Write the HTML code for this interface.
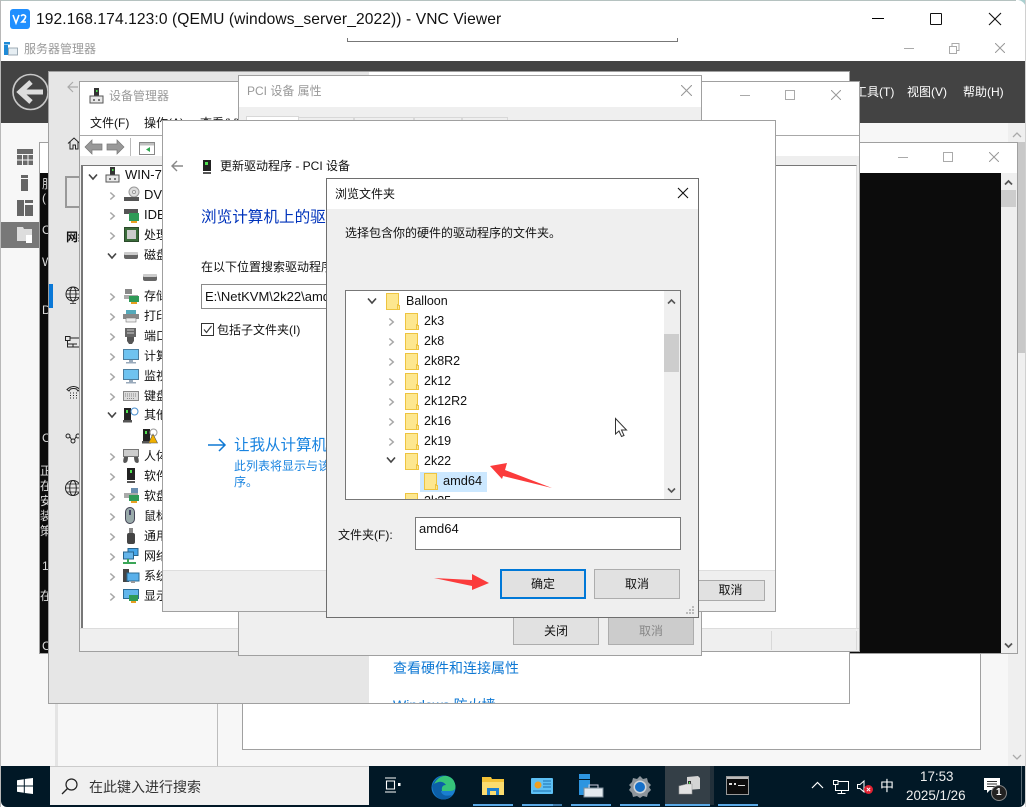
<!DOCTYPE html>
<html><head><meta charset="utf-8"><style>
html,body{margin:0;padding:0;width:1026px;height:807px;overflow:hidden;background:#fff}
body{position:relative;font-family:"Liberation Sans","Noto Sans CJK SC",sans-serif;font-size:12px;color:#111}
div,span,svg{position:absolute}
svg{overflow:visible}
.t{white-space:nowrap;line-height:16px}
.w{box-sizing:border-box;border:1px solid #a0a0a0;background:#fff;overflow:hidden}
.btn{box-sizing:border-box;border:1px solid #adadad;background:#e1e1e1;text-align:center;font-size:12px}
</style></head><body>
<svg width="0" height="0" style="left:0;top:0"><defs>
<symbol id="fo" viewBox="0 0 14 17"><path d="M.5.5H12.5V12.5H13.5V16.5H.5Z" fill="#fde78f" stroke="#eec440"/><path d="M11.5 16V11.5H13" fill="none" stroke="#eec440"/></symbol>
<symbol id="cr" viewBox="0 0 8 10"><path d="M1.5 1L6 5 1.5 9" fill="none" stroke="#a6a6a6" stroke-width="1.7"/></symbol>
<symbol id="cd" viewBox="0 0 10 8"><path d="M1 1.5L5 6 9 1.5" fill="none" stroke="#444" stroke-width="1.6"/></symbol>
<symbol id="x" viewBox="0 0 10 10"><path d="M0 0L10 10M10 0L0 10" fill="none" stroke="#999" stroke-width="1"/></symbol>
<symbol id="mon" viewBox="0 0 16 15"><rect x=".5" y=".5" width="15" height="10" fill="#6fc3f0" stroke="#4d7e9e"/><rect x="6" y="11" width="4" height="2" fill="#9ab"/><rect x="3" y="13" width="10" height="1.5" fill="#9ab"/></symbol>
</defs></svg>

<!-- desktop/vnc frame -->
<div style="left:0;top:0;width:1026px;height:807px;background:#fff;border-top:1px solid #b5c2c0;box-sizing:border-box"></div>
<div style="left:1016px;top:0;width:10px;height:8px;background:#aacfcf"></div>
<div style="left:1016px;top:0;width:10px;height:10px;background:#fff;border-top-right-radius:9px"></div>
<div style="left:0;top:0;width:1px;height:807px;background:#b8b8b8"></div>
<div style="left:1025px;top:0;width:1px;height:807px;background:#d0d0d0"></div>
<svg style="left:10px;top:9px" width="20" height="20"><rect width="20" height="20" rx="3" fill="#1f8fff"/><path d="M3 6L6 14 9 6" fill="none" stroke="#fff" stroke-width="1.6"/><path d="M11 7Q13 5 15 6.500T12 13H16" fill="none" stroke="#fff" stroke-width="1.6"/></svg>
<div class="t" style="left:36px;top:11px;font-size:15.6px;line-height:18px;letter-spacing:.09px;color:#111">192.168.174.123:0 (QEMU (windows_server_2022)) - VNC Viewer</div>
<div style="left:347px;top:38px;width:331px;height:4px;box-sizing:border-box;border:1px solid #777;border-top:0"></div>
<div style="left:872px;top:18px;width:12px;height:1px;background:#000"></div>
<div style="left:930px;top:13px;width:12px;height:12px;box-sizing:border-box;border:1.3px solid #111;border-radius:1px"></div>
<svg style="left:989px;top:13px" width="12" height="12"><path d="M0 0L12 12M12 0L0 12" stroke="#111" stroke-width="1.1"/></svg>

<!-- server manager title -->
<svg style="left:4px;top:42px" width="14" height="14"><rect x="0" y="0" width="6" height="2.500" fill="#1f8ad6"/><rect x="0" y="3" width="4" height="10" fill="#1f8ad6"/><rect x="4.500" y="6" width="9" height="7" fill="#e6eef3" stroke="#8a9aa5" stroke-width=".8"/></svg>
<div class="t" style="left:24px;top:41px;color:#999">服务器管理器</div>
<div style="left:904px;top:48px;width:10px;height:1px;background:#aaa"></div>
<svg style="left:949px;top:43px" width="11" height="11"><path d="M.5 3.500H7.500V10.500H.5ZM3 3.500V.5H10V7.500H7.500" fill="none" stroke="#aaa"/></svg>
<svg style="left:995px;top:43px" width="10" height="10"><use href="#x"/></svg>

<!-- dark band -->
<div style="left:1px;top:61px;width:1024px;height:62px;background:#434343"></div>
<div class="t" style="left:855px;top:84px;color:#fff">工具(T)</div>
<div class="t" style="left:907px;top:84px;color:#fff">视图(V)</div>
<div class="t" style="left:963px;top:84px;color:#fff">帮助(H)</div>
<svg style="left:12px;top:73px" width="37" height="38"><circle cx="18.500" cy="19" r="17.500" fill="none" stroke="#c8c8c8" stroke-width="1.600"/><path d="M8 19H31M19 9L8 19 19 29" fill="none" stroke="#ddd" stroke-width="5"/></svg>

<!-- content backdrop -->
<div style="left:1px;top:123px;width:1024px;height:643px;background:#f7f7f7"></div>
<div style="left:55px;top:703px;width:3px;height:63px;background:#e4e4e4"></div>
<div style="left:217px;top:703px;width:1px;height:63px;background:#bdbdbd"></div>
<div style="left:242px;top:650px;width:739px;height:100px;box-sizing:border-box;background:#fff;border:1px solid #a0a0a0"></div>
<div style="left:1008px;top:123px;width:17px;height:643px;background:#efefef"></div>
<div style="left:1018px;top:142px;width:7px;height:211px;background:#c8c8c8"></div>
<svg style="left:1012px;top:132px" width="10" height="6"><path d="M1 5L5 1 9 5" fill="none" stroke="#aaa" stroke-width="1.300"/></svg>
<svg style="left:1012px;top:754px" width="10" height="6"><path d="M1 1L5 5 9 1" fill="none" stroke="#aaa" stroke-width="1.300"/></svg>

<!-- sidebar -->
<svg style="left:17px;top:149px" width="17" height="17"><path d="M0 0H16V5H0ZM0 6H5V10.500H0ZM6 6H10.500V10.500H6ZM11.500 6H16V10.500H11.500ZM0 11.500H5V16H0ZM6 11.500H10.500V16H6ZM11.500 11.500H16V16H11.500Z" fill="#6a6a6a"/></svg>
<svg style="left:21px;top:175px" width="8" height="16"><path d="M0 0H7V3H0ZM0 4H7V16H0Z" fill="#666"/></svg>
<svg style="left:17px;top:200px" width="17" height="17"><path d="M0 0H7V16H0ZM8 0H16V3H8ZM8 5H16V16H8Z" fill="#666"/></svg>
<div style="left:1px;top:222px;width:39px;height:26px;background:#787878"></div>
<svg style="left:17px;top:227px" width="17" height="16"><path d="M0 0H6L7 2H15V14H0Z" fill="#ddd"/><path d="M9 8H15V16H9Z" fill="#fff"/></svg>

<!-- console window -->
<div style="left:39px;top:142px;width:979px;height:512px;box-sizing:border-box;border:1px solid #a0a0a0;background:#fff"></div>
<div style="left:40px;top:173px;width:961px;height:480px;background:#0c0c0c;overflow:hidden;color:#ddd;font-size:12px">
<span class="t" style="left:2px;top:3px">服</span><span class="t" style="left:2px;top:17px">(</span>
<span class="t" style="left:2px;top:49px">C</span><span class="t" style="left:2px;top:81px">W</span>
<span class="t" style="left:2px;top:129px">D</span><span class="t" style="left:2px;top:257px">C</span>
<span class="t" style="left:0;top:290px">正</span><span class="t" style="left:0;top:305px">在</span><span class="t" style="left:0;top:320px">安</span><span class="t" style="left:0;top:335px">装</span><span class="t" style="left:0;top:350px">策</span>
<span class="t" style="left:2px;top:385px">1</span><span class="t" style="left:0;top:415px">在</span><span class="t" style="left:2px;top:465px">C</span>
</div>
<div style="left:1001px;top:173px;width:16px;height:480px;background:#efefef"></div>
<div style="left:1001px;top:190px;width:15px;height:17px;background:#cdcdcd"></div>
<svg style="left:1004px;top:179px" width="10" height="7"><path d="M1 5.500L4.500 2 8 5.500" fill="none" stroke="#555" stroke-width="1.800"/></svg>
<svg style="left:1004px;top:642px" width="10" height="7"><path d="M1 1.500L4.500 5 8 1.500" fill="none" stroke="#555" stroke-width="1.800"/></svg>
<div style="left:898px;top:157px;width:10px;height:1px;background:#aaa"></div>
<div style="left:943px;top:152px;width:10px;height:10px;box-sizing:border-box;border:1px solid #aaa"></div>
<svg style="left:989px;top:152px" width="10" height="10"><use href="#x"/></svg>

<!-- server manager inner window -->
<div class="w" style="left:48px;top:71px;width:802px;height:633px;background:#fff">
 <div style="left:0;top:0;width:320px;height:631px;background:#e6e6e6"></div>
 <div class="t" style="left:344px;top:588px;color:#0e78d4;font-size:14px">查看硬件和连接属性</div>
 <div class="t" style="left:344px;top:625px;color:#0e78d4;font-size:14px">Windows 防火墙</div>
 <svg style="left:18px;top:9px" width="12" height="12"><path d="M11 6H1M6 1L1 6 6 11" fill="none" stroke="#aaa" stroke-width="1.200"/></svg>
 <div style="left:0;top:212px;width:4px;height:24px;background:#0a78d7"></div>
 <svg style="left:18px;top:65px" width="14" height="13"><path d="M1 6.500L7 1 13 6.500M3 5V12H6V8H8.500V12H11V5" fill="none" stroke="#222"/></svg>
 <div style="left:16px;top:104px;width:20px;height:32px;box-sizing:border-box;border:2px solid #999;background:#e6e6e6"></div>
 <div class="t" style="left:17px;top:157px;font-weight:bold">网络</div>
 <svg style="left:16px;top:215px" width="16" height="17"><circle cx="8" cy="7" r="7" fill="none" stroke="#222"/><ellipse cx="8" cy="7" rx="3" ry="7" fill="none" stroke="#222"/><path d="M1 7H15M2 3.500H14M2 10.500H14M8 14V16.500M5 16.500H11" fill="none" stroke="#222" stroke-width=".8"/></svg>
 <svg style="left:16px;top:264px" width="16" height="14"><path d="M.5.500H5V4.500H.5ZM5 2H15M2.500 4.500V11H15M2.500 8H12M8 8V11" fill="none" stroke="#222"/></svg>
 <svg style="left:17px;top:313px" width="15" height="14"><path d="M1 4.500Q7.500-1.500 14 4.500L12 6 10.500 4Q7.500 3 4.500 4L3 6Z" fill="none" stroke="#222"/><path d="M4 8h1M7 8h1M10 8h1M4 10.500h1M7 10.500h1M10 10.500h1M4 13h1M7 13h1M10 13h1" stroke="#222"/></svg>
 <svg style="left:16px;top:360px" width="16" height="12"><circle cx="3" cy="4" r="2" fill="none" stroke="#222"/><circle cx="13" cy="4" r="2" fill="none" stroke="#222"/><circle cx="8" cy="9" r="2" fill="none" stroke="#222"/><path d="M5 5L6.500 7.500M11 5L9.500 7.500" stroke="#222"/></svg>
 <svg style="left:16px;top:408px" width="16" height="16"><circle cx="8" cy="8" r="7.500" fill="none" stroke="#222"/><ellipse cx="8" cy="8" rx="3.300" ry="7.500" fill="none" stroke="#222"/><path d="M.5 8H15.500M2 4H14M2 12H14" fill="none" stroke="#222" stroke-width=".8"/></svg>
</div>

<!-- device manager -->
<div class="w" style="left:79px;top:81px;width:781px;height:571px;background:#efefef">
 <div style="left:0;top:0;width:779px;height:53px;background:#fff"></div>
 <svg style="left:9px;top:6px" width="15" height="16"><rect x="5" y="0" width="5" height="8" fill="#333"/><rect x="7" y="2" width="1.500" height="2" fill="#4fe04f"/><path d="M1 8H14V15H1Z" fill="#e8e8e8" stroke="#555"/><circle cx="5" cy="12" r="1" fill="#555"/><circle cx="10" cy="12" r="1" fill="#555"/></svg>
 <div class="t" style="left:29px;top:6px;color:#999">设备管理器</div>
 <div class="t" style="left:10px;top:33px;color:#111">文件(F)</div>
 <div class="t" style="left:64px;top:33px;color:#111">操作(A)</div>
 <div class="t" style="left:120px;top:33px;color:#111">查看(V)</div>
 <div style="left:660px;top:13px;width:10px;height:1px;background:#aaa"></div>
 <div style="left:705px;top:8px;width:10px;height:10px;box-sizing:border-box;border:1px solid #aaa"></div>
 <svg style="left:751px;top:8px" width="10" height="10"><use href="#x"/></svg>
 <div style="left:0;top:53px;width:779px;height:1px;background:#a8a8a8"></div>
 <div style="left:0;top:54px;width:779px;height:22px;background:#fff"></div>
 <svg style="left:5px;top:58px" width="18" height="14"><path d="M0 7L7 0V4H17V10H7V14Z" fill="#999" stroke="#777" stroke-width=".7"/></svg>
 <svg style="left:27px;top:58px" width="18" height="14"><path d="M17 7L10 0V4H0V10H10V14Z" fill="#999" stroke="#777" stroke-width=".7"/></svg>
 <div style="left:50px;top:56px;width:1px;height:18px;background:#bbb"></div>
 <svg style="left:59px;top:60px" width="16" height="13"><rect x=".5" y=".5" width="15" height="12" fill="#fff" stroke="#888"/><rect x="1" y="1" width="14" height="2.500" fill="#c0c0c0"/><path d="M11 5V10L7 7.500Z" fill="#2fa84f"/></svg>
 <div style="left:0;top:74px;width:779px;height:4px;background:#eee"></div>
 <div style="left:1px;top:83px;width:776px;height:463px;box-sizing:border-box;background:#fff;border-top:1px solid #777;border-left:2px solid #777;border-right:1px solid #ddd"></div>
 <div style="left:0;top:546px;width:779px;height:1px;background:#dcdcdc"></div>
 <div style="left:691px;top:549px;width:1px;height:19px;background:#d8d8d8"></div>
 <div style="left:776px;top:549px;width:1px;height:19px;background:#d8d8d8"></div>
</div>
<!-- device tree -->
<svg style="left:88px;top:173px" width="10" height="8"><use href="#cd"/></svg>
<svg style="left:105px;top:167px" width="15" height="16"><rect x="5" y="0" width="5" height="8" fill="#333"/><rect x="7" y="2" width="1.500" height="2" fill="#4fe04f"/><path d="M1 8H14V15H1Z" fill="#e8e8e8" stroke="#555"/><circle cx="5" cy="12" r="1" fill="#555"/><circle cx="10" cy="12" r="1" fill="#555"/></svg>
<div class="t" style="left:125px;top:167px;font-size:13px">WIN-7</div>
<div class="t" style="left:144px;top:187px;font-size:13px">DVD</div>
<div class="t" style="left:144px;top:207px;font-size:13px">IDE</div>
<div class="t" style="left:144px;top:227px">处理器</div>
<div class="t" style="left:144px;top:247px">磁盘驱</div>
<div class="t" style="left:144px;top:288px">存储控</div>
<div class="t" style="left:144px;top:308px">打印队</div>
<div class="t" style="left:144px;top:328px">端口</div>
<div class="t" style="left:144px;top:348px">计算机</div>
<div class="t" style="left:144px;top:368px">监视器</div>
<div class="t" style="left:144px;top:388px">键盘</div>
<div class="t" style="left:144px;top:407px">其他设</div>
<div class="t" style="left:144px;top:448px">人体学</div>
<div class="t" style="left:144px;top:468px">软件设</div>
<div class="t" style="left:144px;top:488px">软盘驱</div>
<div class="t" style="left:144px;top:508px">鼠标和</div>
<div class="t" style="left:144px;top:528px">通用串</div>
<div class="t" style="left:144px;top:548px">网络适</div>
<div class="t" style="left:144px;top:568px">系统设</div>
<div class="t" style="left:144px;top:588px">显示适</div>
<svg style="left:109px;top:191px" width="7" height="10"><use href="#cr"/></svg>
<svg style="left:109px;top:211px" width="7" height="10"><use href="#cr"/></svg>
<svg style="left:109px;top:231px" width="7" height="10"><use href="#cr"/></svg>
<svg style="left:107px;top:252px" width="10" height="8"><use href="#cd"/></svg>
<svg style="left:109px;top:292px" width="7" height="10"><use href="#cr"/></svg>
<svg style="left:109px;top:312px" width="7" height="10"><use href="#cr"/></svg>
<svg style="left:109px;top:332px" width="7" height="10"><use href="#cr"/></svg>
<svg style="left:109px;top:352px" width="7" height="10"><use href="#cr"/></svg>
<svg style="left:109px;top:372px" width="7" height="10"><use href="#cr"/></svg>
<svg style="left:109px;top:392px" width="7" height="10"><use href="#cr"/></svg>
<svg style="left:107px;top:411px" width="10" height="8"><use href="#cd"/></svg>
<svg style="left:109px;top:452px" width="7" height="10"><use href="#cr"/></svg>
<svg style="left:109px;top:472px" width="7" height="10"><use href="#cr"/></svg>
<svg style="left:109px;top:492px" width="7" height="10"><use href="#cr"/></svg>
<svg style="left:109px;top:512px" width="7" height="10"><use href="#cr"/></svg>
<svg style="left:109px;top:532px" width="7" height="10"><use href="#cr"/></svg>
<svg style="left:109px;top:552px" width="7" height="10"><use href="#cr"/></svg>
<svg style="left:109px;top:572px" width="7" height="10"><use href="#cr"/></svg>
<svg style="left:109px;top:592px" width="7" height="10"><use href="#cr"/></svg>
<!-- tree icons -->
<svg style="left:124px;top:187px" width="16" height="15"><circle cx="10" cy="5" r="5" fill="#ddd" stroke="#999"/><circle cx="10" cy="5" r="1.500" fill="#fff" stroke="#999"/><path d="M0 10H15V14H0Z" fill="#555"/></svg>
<svg style="left:124px;top:208px" width="16" height="15"><path d="M0 1H14V6H0Z" fill="#555"/><rect x="5" y="5" width="10" height="8" fill="#2f9a57"/><rect x="7" y="13" width="6" height="2" fill="#e8a020"/></svg>
<svg style="left:124px;top:227px" width="15" height="15"><rect x=".5" y=".5" width="14" height="14" fill="#3a6b3a" stroke="#2a4a2a"/><rect x="3" y="3" width="9" height="9" fill="#ccc"/></svg>
<svg style="left:124px;top:252px" width="14" height="7"><rect width="14" height="7" rx="2" fill="#666"/><rect y="0" width="14" height="3" rx="1" fill="#ccc"/></svg>
<svg style="left:143px;top:274px" width="14" height="7"><rect width="14" height="7" rx="2" fill="#666"/><rect y="0" width="14" height="3" rx="1" fill="#ccc"/></svg>
<svg style="left:124px;top:289px" width="16" height="15"><path d="M1 0H8V5H1Z" fill="#888"/><path d="M0 6H14V10H0Z" fill="#aaa"/><rect x="5" y="7" width="10" height="6" fill="#2f9a57"/><rect x="7" y="13" width="6" height="2" fill="#e8a020"/></svg>
<svg style="left:123px;top:310px" width="16" height="12"><rect x="3" y="0" width="10" height="4" fill="#5ab"/><rect x="0" y="4" width="16" height="5" fill="#888"/><rect x="3" y="8" width="10" height="4" fill="#eee" stroke="#777" stroke-width=".6"/></svg>
<svg style="left:125px;top:328px" width="11" height="16"><rect x="0" y="0" width="11" height="9" fill="#666"/><path d="M2 9H9V13L7 16H4L2 13Z" fill="#555"/><path d="M2 2h7M2 5h7" stroke="#ccc"/></svg>
<svg style="left:123px;top:349px" width="16" height="15"><use href="#mon"/></svg>
<svg style="left:123px;top:369px" width="16" height="15"><use href="#mon"/></svg>
<svg style="left:123px;top:391px" width="16" height="10"><rect x=".5" y=".5" width="15" height="9" fill="#dcdcdc" stroke="#888"/><path d="M2 3H14M2 5H14M4 7.500H12" stroke="#888" stroke-dasharray="1 1"/></svg>
<svg style="left:123px;top:408px" width="16" height="15"><rect x="1" y="0" width="7" height="12" fill="#222"/><rect x="3" y="2" width="2" height="3" fill="#4fe04f"/><rect x="0" y="12" width="9" height="2.500" fill="#555"/><circle cx="11.500" cy="3.500" r="3.500" fill="#fff" stroke="#4a90d0"/></svg>
<svg style="left:142px;top:429px" width="16" height="15"><rect x="1" y="0" width="7" height="12" fill="#222"/><rect x="3" y="2" width="2" height="3" fill="#4fe04f"/><rect x="0" y="12" width="9" height="2.500" fill="#555"/><circle cx="11.500" cy="3.500" r="3.500" fill="#fff" stroke="#999"/><path d="M11 5L6.500 14H15.500Z" fill="#f0b000" stroke="#555" stroke-width=".6"/></svg>
<svg style="left:123px;top:449px" width="16" height="15"><rect x=".5" y=".5" width="15" height="7" fill="#ccc" stroke="#777"/><path d="M1 8Q-1 14 2 14T5 8ZM11 8Q11 14 14 14T15 8Z" fill="#555"/></svg>
<svg style="left:127px;top:468px" width="9" height="16"><rect x="0" y="0" width="8" height="12" fill="#222"/><rect x="3" y="2" width="2" height="3" fill="#4fe04f"/><rect x="0" y="13" width="8" height="2" fill="#555"/></svg>
<svg style="left:124px;top:488px" width="16" height="16"><rect x="7" y="0" width="7" height="5" fill="#6a8fb0"/><path d="M0 5H14V10H0Z" fill="#aaa"/><rect x="5" y="7" width="10" height="6" fill="#2f9a57"/><rect x="7" y="13" width="6" height="2" fill="#e8a020"/></svg>
<svg style="left:125px;top:507px" width="11" height="18"><rect x=".5" y=".5" width="9" height="16" rx="4.500" fill="#9aa" stroke="#445"/><rect x="4" y="3" width="2" height="5" fill="#446"/></svg>
<svg style="left:127px;top:528px" width="8" height="16"><rect x="2" y="0" width="4" height="5" fill="#888"/><rect x="0" y="5" width="8" height="11" rx="2" fill="#444"/></svg>
<svg style="left:123px;top:548px" width="16" height="16"><rect x="5" y=".5" width="10" height="7" fill="#45a5e8" stroke="#27648c"/><rect x=".5" y="4" width="10" height="7" fill="#65b5ea" stroke="#27648c"/><path d="M5 11V14M0 15H13" stroke="#3aa657" stroke-width="2"/></svg>
<svg style="left:123px;top:569px" width="16" height="14"><rect x="0" y="0" width="6" height="13" fill="#444"/><rect x="4" y="4" width="12" height="8" fill="#59b0ea" stroke="#2c6c96"/><rect x="8" y="12" width="4" height="2" fill="#999"/></svg>
<svg style="left:123px;top:589px" width="16" height="15"><rect x=".5" y=".5" width="15" height="9" fill="#62b6ec" stroke="#2c6c96"/><rect x="6" y="6" width="9" height="6" fill="#2f9a57"/><rect x="8" y="12" width="5" height="2" fill="#e8a020"/></svg>

<!-- PCI props -->
<div class="w" style="left:238px;top:75px;width:464px;height:581px;background:#efefef">
 <div style="left:0;top:0;width:462px;height:31px;background:#fff"></div>
 <div class="t" style="left:8px;top:7px;color:#999">PCI 设备 属性</div>
 <svg style="left:442px;top:9px" width="11" height="11"><use href="#x"/></svg>
 <div style="left:7px;top:40px;width:51px;height:10px;background:#fff;border:1px solid #d8d8d8"></div>
 <div style="left:59px;top:41px;width:56px;height:9px;box-sizing:border-box;border:1px solid #d8d8d8;border-bottom:0"></div>
 <div style="left:115px;top:41px;width:60px;height:9px;box-sizing:border-box;border:1px solid #d8d8d8;border-bottom:0"></div>
 <div style="left:175px;top:41px;width:48px;height:9px;box-sizing:border-box;border:1px solid #d8d8d8;border-bottom:0"></div>
 <div style="left:223px;top:41px;width:46px;height:9px;box-sizing:border-box;border:1px solid #d8d8d8;border-bottom:0"></div>
 <div class="btn" style="left:274px;top:541px;width:86px;height:28px;line-height:26px">关闭</div>
 <div class="btn" style="left:369px;top:541px;width:86px;height:28px;line-height:26px;background:#ccc;color:#888">取消</div>
</div>

<!-- update driver -->
<div class="w" style="left:162px;top:120px;width:614px;height:492px;background:#fff">
 <svg style="left:8px;top:39px" width="12" height="12"><path d="M12 6H1M6 1L1 6 6 11" fill="none" stroke="#888" stroke-width="1.400"/></svg>
 <svg style="left:40px;top:39px" width="8" height="14"><rect width="8" height="11" fill="#222"/><rect x="2" y="2" width="3" height="3" fill="#4fe04f"/><rect y="12" width="8" height="2" fill="#555"/></svg>
 <div class="t" style="left:57px;top:37px;color:#111">更新驱动程序 - PCI 设备</div>
 <div class="t" style="left:38px;top:87px;font-size:15.6px;line-height:20px;color:#0033bb">浏览计算机上的驱动程序</div>
 <div class="t" style="left:38px;top:138px;color:#111">在以下位置搜索驱动程序:</div>
 <div style="left:38px;top:163px;width:300px;height:25px;box-sizing:border-box;border:1px solid #8a8a8a"><span class="t" style="left:3px;top:4px;font-size:13px">E:\NetKVM\2k22\amd64</span></div>
 <div style="left:38px;top:202px;width:13px;height:13px;box-sizing:border-box;border:1px solid #333"></div>
 <svg style="left:40px;top:204px" width="10" height="9"><path d="M1 4.500L3.500 7.500 8.500 1" fill="none" stroke="#333" stroke-width="1.100"/></svg>
 <div class="t" style="left:54px;top:201px;color:#111">包括子文件夹(I)</div>
 <svg style="left:45px;top:317px" width="18" height="14"><path d="M0 7H17M11 1L17 7 11 13" fill="none" stroke="#0e78d4" stroke-width="1.500"/></svg>
 <div class="t" style="left:71px;top:315px;font-size:15.5px;line-height:20px;color:#1a84e0">让我从计算机上的可用</div>
 <div class="t" style="left:71px;top:337px;color:#1a84e0">此列表将显示与该设备兼容的已安装的驱动程</div>
 <div class="t" style="left:71px;top:353px;color:#1a84e0">序。</div>
 <div style="left:0;top:449px;width:612px;height:41px;background:#efefef;border-top:1px solid #dedede"></div>
 <div class="btn" style="left:533px;top:459px;width:69px;height:21px;line-height:19px;border-color:#aaa">取消</div>
</div>

<!-- browse dialog -->
<div class="w" style="left:326px;top:178px;width:373px;height:440px;background:#efefef;border-color:#6e6e6e">
 <div style="left:0;top:0;width:371px;height:30px;background:#fff"></div>
 <div class="t" style="left:8px;top:7px;color:#111">浏览文件夹</div>
 <svg style="left:351px;top:9px" width="10" height="10"><path d="M0 0L10 10M10 0L0 10" stroke="#111" stroke-width="1.100"/></svg>
 <div class="t" style="left:18px;top:46px;color:#111">选择包含你的硬件的驱动程序的文件夹。</div>
 <div style="left:18px;top:111px;width:336px;height:210px;box-sizing:border-box;background:#fff;border:1px solid #777;overflow:hidden">
  <div style="left:318px;top:0;width:16px;height:208px;background:#efefef"></div>
  <div style="left:318px;top:43px;width:15px;height:38px;background:#cdcdcd"></div>
  <svg style="left:321px;top:7px" width="10" height="7"><path d="M1 5.500L4.500 2 8 5.500" fill="none" stroke="#555" stroke-width="1.600"/></svg>
  <svg style="left:321px;top:196px" width="10" height="7"><path d="M1 1.500L4.500 5 8 1.500" fill="none" stroke="#555" stroke-width="1.600"/></svg>
  <svg style="left:21px;top:6px" width="10" height="8"><use href="#cd"/></svg>
  <svg style="left:40px;top:2px" width="14" height="17"><use href="#fo"/></svg>
  <div class="t" style="left:60px;top:2px;font-size:12.500px">Balloon</div>
  <svg style="left:42px;top:26px" width="7" height="10"><use href="#cr"/></svg>
  <svg style="left:59px;top:22px" width="14" height="17"><use href="#fo"/></svg>
  <div class="t" style="left:78px;top:22px;font-size:12.500px">2k3</div>
  <svg style="left:42px;top:46px" width="7" height="10"><use href="#cr"/></svg>
  <svg style="left:59px;top:42px" width="14" height="17"><use href="#fo"/></svg>
  <div class="t" style="left:78px;top:42px;font-size:12.500px">2k8</div>
  <svg style="left:42px;top:66px" width="7" height="10"><use href="#cr"/></svg>
  <svg style="left:59px;top:62px" width="14" height="17"><use href="#fo"/></svg>
  <div class="t" style="left:78px;top:62px;font-size:12.500px">2k8R2</div>
  <svg style="left:42px;top:86px" width="7" height="10"><use href="#cr"/></svg>
  <svg style="left:59px;top:82px" width="14" height="17"><use href="#fo"/></svg>
  <div class="t" style="left:78px;top:82px;font-size:12.500px">2k12</div>
  <svg style="left:42px;top:106px" width="7" height="10"><use href="#cr"/></svg>
  <svg style="left:59px;top:102px" width="14" height="17"><use href="#fo"/></svg>
  <div class="t" style="left:78px;top:102px;font-size:12.500px">2k12R2</div>
  <svg style="left:42px;top:126px" width="7" height="10"><use href="#cr"/></svg>
  <svg style="left:59px;top:122px" width="14" height="17"><use href="#fo"/></svg>
  <div class="t" style="left:78px;top:122px;font-size:12.500px">2k16</div>
  <svg style="left:42px;top:146px" width="7" height="10"><use href="#cr"/></svg>
  <svg style="left:59px;top:142px" width="14" height="17"><use href="#fo"/></svg>
  <div class="t" style="left:78px;top:142px;font-size:12.500px">2k19</div>
  <svg style="left:40px;top:165px" width="10" height="8"><use href="#cd"/></svg>
  <svg style="left:59px;top:162px" width="14" height="17"><use href="#fo"/></svg>
  <div class="t" style="left:78px;top:162px;font-size:12.500px">2k22</div>
  <div style="left:74px;top:181px;width:67px;height:20px;background:#cce8ff"></div>
  <svg style="left:78px;top:182px" width="14" height="17"><use href="#fo"/></svg>
  <div class="t" style="left:97px;top:182px;font-size:12.800px">amd64</div>
  <svg style="left:59px;top:202px" width="14" height="17"><use href="#fo"/></svg>
  <div class="t" style="left:78px;top:202px;font-size:12.500px">2k25</div>
 </div>
 <div class="t" style="left:11px;top:348px;color:#111">文件夹(F):</div>
 <div style="left:88px;top:338px;width:266px;height:33px;box-sizing:border-box;background:#fff;border:1px solid #7a7a7a"><span class="t" style="left:3px;top:3px;font-size:13px">amd64</span></div>
 <div class="btn" style="left:173px;top:390px;width:86px;height:30px;line-height:26px;border:2px solid #0078d7">确定</div>
 <div class="btn" style="left:267px;top:390px;width:86px;height:30px;line-height:28px">取消</div>
 <svg style="left:358px;top:426px" width="10" height="10"><path d="M7 1h2v2h-2zM4 4h2v2h-2zM7 4h2v2h-2zM1 7h2v2h-2zM4 7h2v2h-2zM7 7h2v2h-2z" fill="#bbb"/></svg>
</div>

<!-- arrows/cursor -->
<svg style="left:0;top:0" width="1026" height="807"><polygon points="490,466 507,463 505,470 552,488 503,476 502,479" fill="#fb3b3b"/><polygon points="434,578 472,580 472,574 489,583 472,590 472,586" fill="#fb3b3b"/><path d="M615.500 418.500V434L619 431 621.500 436.500 624 435.500 621.500 430H626.500Z" fill="#fff" stroke="#333"/></svg>

<!-- taskbar -->
<div style="left:1px;top:766px;width:1024px;height:41px;background:#011826;border-radius:0 0 6px 6px"></div>
<svg style="left:17px;top:778px" width="16" height="16"><path d="M0 2.200L6.800 1.200V7.500H0ZM7.800 1L16 0V7.500H7.800ZM0 8.500H6.800V14.800L0 13.800ZM7.800 8.500H16V16L7.800 15Z" fill="#fff"/></svg>
<div style="left:50px;top:766px;width:319px;height:39px;background:#f0f0f0;border-top:1px solid #ccc;box-sizing:border-box"></div>
<svg style="left:61px;top:778px" width="17" height="17"><circle cx="10.500" cy="6.500" r="5.500" fill="none" stroke="#222" stroke-width="1.200"/><path d="M6.500 10.500L1 16" stroke="#222" stroke-width="1.300"/></svg>
<div class="t" style="left:89px;top:779px;color:#333;font-size:14px">在此键入进行搜索</div>
<svg style="left:385px;top:777px" width="16" height="17"><path d="M0 1H11M0 15H11M1.500 4H9.500V12H1.500Z" fill="none" stroke="#fff" stroke-width="1.100"/><rect x="13" y="6" width="2.500" height="3" fill="#fff"/></svg>
<svg style="left:431px;top:775px" width="25" height="25"><circle cx="12.500" cy="12.500" r="12" fill="#1a7fd0"/><path d="M1 11Q5 0 15 .7 24 2 24.500 13 24 16 19 16H10Q10 19 14 20.500 18 21 21 20 17 25 11 24.500 3 23 1 11Z" fill="#0c5fa8"/><path d="M3 9Q8 0 16 1 24 3 24.500 12 24.500 16 19 16H11Q10 10 15 10 11 4 3 9Z" fill="#36c47a"/></svg>
<svg style="left:482px;top:777px" width="22" height="18"><path d="M0 0H9L10 2H22V18H0Z" fill="#f3c237"/><rect x="0" y="5" width="22" height="13" fill="#fbdc6f"/><rect x="5" y="11" width="12" height="7" fill="#1c7ed0"/><rect x="8" y="14" width="6" height="4" fill="#fbdc6f"/></svg>
<div style="left:473px;top:804px;width:40px;height:2px;background:#5aa9e6"></div>
<svg style="left:531px;top:778px" width="22" height="16"><rect width="22" height="16" rx="1" fill="#5dc0f5"/><circle cx="7" cy="7" r="3.500" fill="#f0a020"/><path d="M12 3H20M12 6H20M12 9H20M2 13H20" stroke="#1d6fb0"/></svg>
<div style="left:522px;top:804px;width:31px;height:2px;background:#5aa9e6"></div>
<div style="left:553px;top:804px;width:9px;height:2px;background:#3f7bab"></div>
<svg style="left:579px;top:774px" width="25" height="24"><rect x="0" y="0" width="11" height="5" fill="#2d95e0"/><rect x="0" y="6" width="11" height="15" fill="#2d95e0"/><rect x="5" y="14" width="19" height="9" fill="#e3eaf0" stroke="#7d8d99"/><path d="M10 14V11H19V14" fill="none" stroke="#ccd"/></svg>
<div style="left:571px;top:804px;width:40px;height:2px;background:#5aa9e6"></div>
<svg style="left:628px;top:775px" width="24" height="24"><path d="M12 1l3 3 4-1 1 4 3 3-2 2 2 3-3 3-1 4-4-1-3 2-3-2-4 1-1-4-3-3 2-3-2-2 3-3 1-4 4 1z" fill="#8d959c"/><circle cx="12" cy="12" r="6.500" fill="#cfd5da"/><circle cx="12" cy="12" r="5" fill="#1670c8"/></svg>
<div style="left:620px;top:804px;width:40px;height:2px;background:#5aa9e6"></div>
<div style="left:665px;top:766px;width:45px;height:39px;background:#343f47"></div>
<svg style="left:678px;top:776px" width="22" height="19"><path d="M9 1L20 0 22 2V13L9 14Z" fill="#d4d4d4"/><rect x="10" y="5" width="3" height="4" fill="#333"/><rect x="11" y="6" width="1" height="1.500" fill="#4f4"/><path d="M1 10L9 8H14V18H1Z" fill="#e2e2e2" stroke="#999" stroke-width=".6"/></svg>
<div style="left:665px;top:804px;width:45px;height:2px;background:#5aa9e6"></div>
<div style="left:710px;top:766px;width:4px;height:39px;background:#22303a"></div>
<svg style="left:726px;top:776px" width="23" height="20"><rect x=".5" y=".5" width="22" height="18" fill="#0c0c0c" stroke="#999"/><rect x="1" y="1" width="21" height="2" fill="#bbb"/><path d="M3 7h3v2h-3zM8 7h2v2h-2zM12 9h7v1h-7z" fill="#ddd"/></svg>
<div style="left:718px;top:804px;width:40px;height:2px;background:#5aa9e6"></div>
<svg style="left:811px;top:781px" width="13" height="8"><path d="M1 7L6.500 1.500 12 7" fill="none" stroke="#fff" stroke-width="1.200"/></svg>
<svg style="left:833px;top:780px" width="16" height="14"><path d="M.5.500H5V4.500H.5ZM5 1.500H15.500V10.500H2.500V4.500M8.500 10.500V13.500M4.500 13.500H12.500" fill="none" stroke="#fff"/></svg>
<svg style="left:857px;top:780px" width="17" height="15"><path d="M.5 4.500H3L7 1V12L3 8.500H.5Z" fill="none" stroke="#fff"/><circle cx="11.500" cy="9.500" r="4.500" fill="#e02030"/><path d="M9.800 7.800L13.200 11.200M13.200 7.800L9.800 11.200" stroke="#fff"/></svg>
<div class="t" style="left:880px;top:778px;color:#fff;font-size:14px">中</div>
<div class="t" style="left:920px;top:769px;color:#eee;font-size:13.400px">17:53</div>
<div class="t" style="left:906px;top:788px;color:#eee;font-size:13.400px">2025/1/26</div>
<svg style="left:984px;top:778px" width="24" height="24"><path d="M0 0H16V12H6L3 15V12H0Z" fill="#fff"/><path d="M3 3.500H13M3 6H13M3 8.500H11" stroke="#333"/><circle cx="15" cy="15" r="7.500" fill="#222" stroke="#888"/></svg>
<div class="t" style="left:996px;top:785px;color:#fff;font-size:10px;font-weight:bold">1</div>
<div style="left:1021px;top:766px;width:1px;height:39px;background:#5a6a74"></div>
</body></html>
